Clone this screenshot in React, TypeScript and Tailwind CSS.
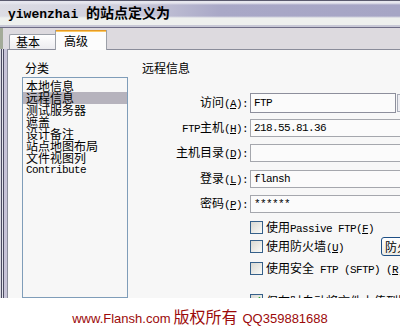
import React from "react";

const CJK = "font-['Noto_Sans_CJK_SC',sans-serif]";

const M = ({ children }: { children: React.ReactNode }) => (
  <span className="font-['Liberation_Mono',monospace] text-[11px] tracking-[-0.6px]">{children}</span>
);

const Key = ({ k }: { k: string }) => (
  <M>
    (<span className="underline">{k}</span>)
  </M>
);

const Check = ({ checked }: { checked?: boolean }) => (
  <span className="w-[13px] h-[13px] shrink-0 border border-[#35608a] bg-[linear-gradient(135deg,#d8d8d2,#fbfbf8)] flex items-center justify-center">
    {checked && (
      <svg width="9" height="9" viewBox="0 0 9 9">
        <path d="M1 4.5 L3.5 7 L8 1.5" stroke="#21a121" strokeWidth="2" fill="none" />
      </svg>
    )}
  </span>
);

const Label = ({ children }: { children: React.ReactNode }) => (
  <div className={`w-[110px] shrink-0 text-right pr-[2px] text-[12px] leading-[12px] text-black whitespace-nowrap ${CJK}`}>{children}</div>
);

const Input = ({ children }: { children?: React.ReactNode }) => (
  <div className="h-[18px] w-[180px] shrink-0 border border-[#a5a7ad] bg-[#fbfbfb] pl-[3px] flex items-center text-black leading-[12px]">
    {children}
  </div>
);

export default function App() {
  const items = ["本地信息", "远程信息", "测试服务器", "遮盖", "设计备注", "站点地图布局", "文件视图列"];
  return (
    <div className="w-[400px] h-[334px] overflow-hidden bg-white flex flex-col">
      <div className="h-[298px] shrink-0 overflow-hidden flex flex-col">
        {/* Title bar */}
        <div className="h-[28px] shrink-0 flex items-center pl-[8px] pb-[1px] bg-[linear-gradient(to_bottom,#5a5a6e_0px,#5a5a6e_1px,#e6e6ee_1px,#e6e6ee_3px,transparent_5px,transparent_16px,#eef0ee_18px,#eef0ee_25px,#c8c8d6_25px,#c8c8d6_27px,#6e6c86_27px),linear-gradient(to_right,#dcdce4,#cfcfdd_30%,#a9a8c7_55%,#a6a5c5)]">
          <span className="font-['Liberation_Mono',monospace] font-bold text-[13px] leading-[14px] text-black whitespace-pre">
            yiwenzhai <span className={`${CJK} text-[14px] font-bold`}>的站点定义为</span>
          </span>
        </div>

        {/* Tabs row */}
        <div className="h-[21px] shrink-0 flex items-end bg-[#dddadf] relative z-10">
          <div className="w-[3px] self-stretch bg-[#a3ab98]" />
          <div className="w-[6px]" />
          <div className={`w-[46px] h-[15px] border-t border-l border-[#9ca0a8] rounded-tl-[2px] bg-[linear-gradient(to_bottom,#ffffff,#ececf0)] pl-[6px] flex items-center text-[12px] leading-[12px] text-black ${CJK}`}>
            基本
          </div>
          <div className="w-[52px] h-[20px] mb-[-1px] border-l border-r border-[#9ca0a8] bg-[#fcfcfc] flex flex-col">
            <div className="h-[1px] bg-[#e59a26]" />
            <div className="h-[1px] bg-[#fbc862]" />
            <div className={`flex-1 pl-[8px] flex items-center text-[12px] leading-[12px] text-black ${CJK}`}>高级</div>
          </div>
        </div>

        {/* Panel row */}
        <div className="flex-1 flex min-h-0">
          <div className="w-[1px] bg-[#d8d8e0]" />
          <div className="w-[1px] bg-[#4c4c62]" />
          <div className="w-[1px] bg-[#e4e4ec]" />
          <div className="w-[1px] bg-[#4c4c62]" />
          <div className="w-[3px] bg-[#c8c4d8]" />
          <div className="flex-1 border-l border-t border-[#8a8c9a] bg-[#f7f7f7] flex overflow-hidden">
            {/* Left column */}
            <div className="w-[132px] shrink-0 pl-[14px] flex flex-col">
              <div className={`mt-[12px] ml-[3px] text-[12px] leading-[12px] text-black ${CJK}`}>分类</div>
              <div className="mt-[3px] w-[106px] h-[300px] border border-[#7f9db9] bg-[#f7f7f7] pt-[2px] flex flex-col">
                {items.map((t, i) => (
                  <div
                    key={t}
                    className={`h-[12px] pl-[3px] text-[12px] leading-[12px] text-black ${CJK} ${i === 1 ? "bg-[#b6b3bd]" : ""}`}
                  >
                    {t}
                  </div>
                ))}
                <div className="h-[12px] pl-[3px] leading-[12px] text-black flex items-center">
                  <M>Contribute</M>
                </div>
              </div>
            </div>

            {/* Right column */}
            <div className="w-[300px] shrink-0 flex flex-col">
              <div className={`mt-[12px] pl-[2px] text-[12px] leading-[12px] text-black ${CJK}`}>远程信息</div>
              <div className="mt-[4px] h-[1px] bg-[#a2a2a8]" />

              <div className="mt-[15px] h-[20px] flex items-center">
                <Label>
                  访问<Key k="A" />
                  <M>:</M>
                </Label>
                <div className="h-[20px] w-[146px] shrink-0 border border-[#8d8f9c] bg-[#fbfbfb] pl-[3px] flex items-center text-black leading-[12px]">
                  <M>FTP</M>
                </div>
                <div className="h-[18px] w-[16px] ml-[1px] shrink-0 border border-[#a8acb8] bg-[#eeeef2]" />
              </div>

              <div className="mt-[6px] h-[18px] flex items-center">
                <Label>
                  <M>FTP</M>主机<Key k="H" />
                  <M>:</M>
                </Label>
                <Input>
                  <M>218.55.81.36</M>
                </Input>
              </div>

              <div className="mt-[7px] h-[18px] flex items-center">
                <Label>
                  主机目录<Key k="D" />
                  <M>:</M>
                </Label>
                <Input />
              </div>

              <div className="mt-[8px] h-[18px] flex items-center">
                <Label>
                  登录<Key k="L" />
                  <M>:</M>
                </Label>
                <Input>
                  <M>flansh</M>
                </Input>
              </div>

              <div className="mt-[7px] h-[18px] flex items-center">
                <Label>
                  密码<Key k="P" />
                  <M>:</M>
                </Label>
                <Input>
                  <M>******</M>
                </Input>
              </div>

              <div className="ml-[110px] flex flex-col">
                <div className="mt-[8px] h-[13px] flex items-center">
                  <Check />
                  <span className={`ml-[3px] text-[12px] leading-[12px] text-black whitespace-pre ${CJK}`}>
                    使用<M>Passive FTP</M>
                    <Key k="F" />
                  </span>
                </div>
                <div className="mt-[3px] h-[19px] flex items-center">
                  <Check />
                  <span className={`ml-[3px] w-[115px] shrink-0 text-[12px] leading-[12px] text-black whitespace-pre ${CJK}`}>
                    使用防火墙<Key k="U" />
                  </span>
                  <div className={`h-[19px] w-[70px] shrink-0 rounded-[3px] border border-[#1e4f85] bg-[linear-gradient(to_bottom,#ffffff,#ecebe6)] pl-[3px] flex items-center whitespace-nowrap overflow-hidden text-[12px] leading-[12px] text-black ${CJK}`}>
                    防火墙设置
                  </div>
                </div>
                <div className="mt-[6px] h-[13px] flex items-center">
                  <Check />
                  <span className={`ml-[3px] text-[12px] leading-[12px] text-black whitespace-pre ${CJK}`}>
                    使用安全<M> FTP (SFTP) </M>
                    <Key k="R" />
                  </span>
                </div>
              </div>
              <div className="mt-[7px] ml-[12px] h-[1px] bg-[#a2a2a8]" />
              <div className="ml-[110px] mt-[12px] h-[13px] flex items-center">
                <Check checked />
                <span className={`ml-[3px] text-[12px] leading-[12px] text-black whitespace-pre ${CJK}`}>
                  保存时自动将文件上传到服务器
                </span>
              </div>
            </div>
          </div>
        </div>
      </div>

      {/* Footer watermark */}
      <div className="h-[36px] shrink-0 bg-white flex items-center justify-center">
        <div className="flex items-baseline text-[#9c0a0a]">
          <span className="font-['Liberation_Sans',Arial,sans-serif] text-[13px]">www.Flansh.com</span>
          <span className={`${CJK} text-[16px] ml-[3px] mr-[5px]`}>版权所有</span>
          <span className="font-['Liberation_Sans',Arial,sans-serif] text-[13px]">QQ359881688</span>
        </div>
      </div>
    </div>
  );
}
